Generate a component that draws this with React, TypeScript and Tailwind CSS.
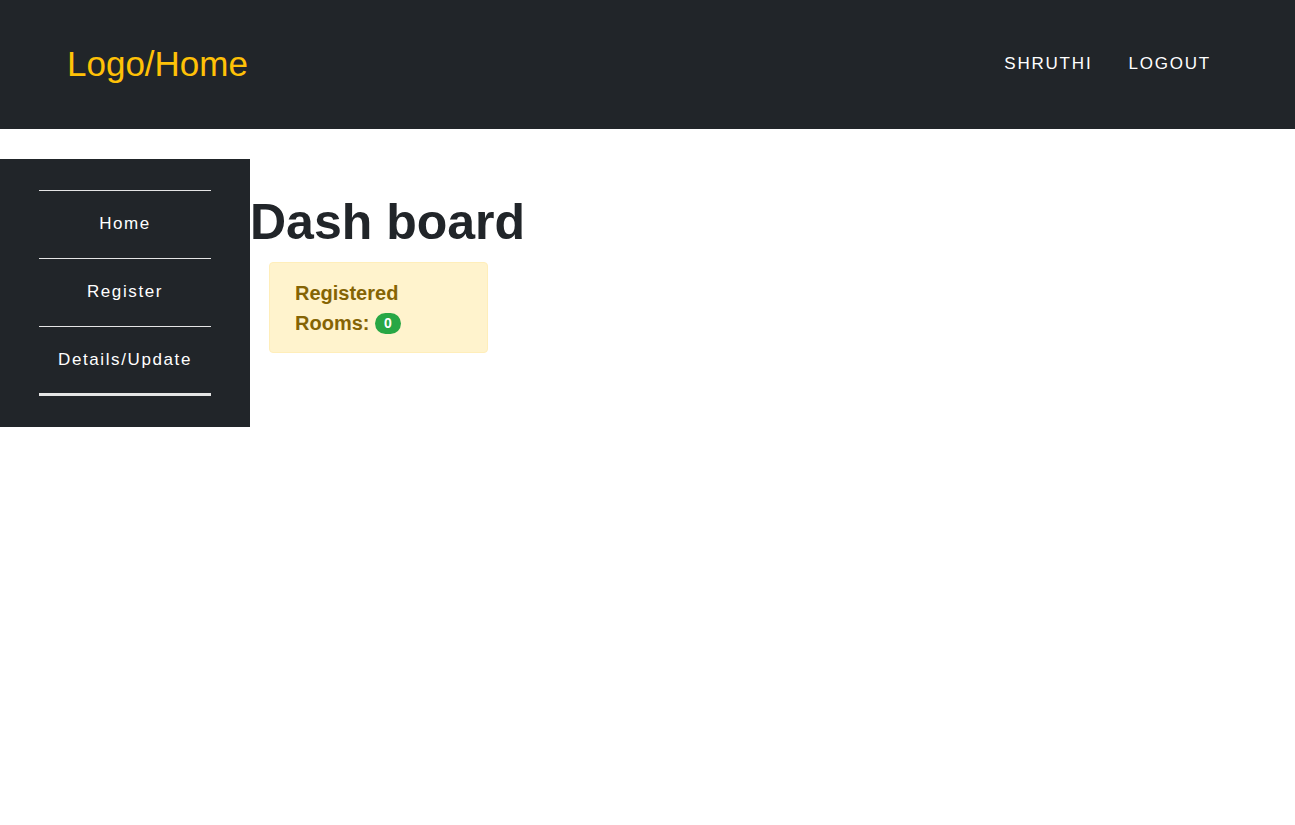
import React from 'react';

const navLinks = ['SHRUTHI', 'LOGOUT'];
const sideLinks = ['Home', 'Register', 'Details/Update'];

export default function App() {
    return (
        <div className="min-h-screen bg-white font-['Liberation_Sans',Arial,sans-serif]">

            {/* Top navbar */}
            <nav className="h-[129px] bg-[#212529] flex items-center justify-between pl-[67px] pr-[84px]">
                <a className="text-[35px] leading-none text-[#ffc107] -mt-[2px]">Logo/Home</a>
                <div className="flex items-center gap-[36px] -mt-[1px]">
                    {navLinks.map((link) => (
                        <a key={link} className="text-[17px] tracking-[1.8px] text-white">{link}</a>
                    ))}
                </div>
            </nav>

            <div className="flex items-start mt-[30px]">

                {/* Sidebar */}
                <aside className="w-[250px] bg-[#212529] px-[39px] pt-[31px] pb-[31px]">
                    <ul className="border-b-[3px] border-[#e5e5e5]">
                        {sideLinks.map((link, i) => (
                            <li
                                key={link}
                                className={`${i === sideLinks.length - 1 ? 'h-[67px]' : 'h-[68px]'} border-t border-[#e5e5e5] flex items-center justify-center pb-[1px] text-[17px] tracking-[1.6px] text-white`}
                            >
                                {link}
                            </li>
                        ))}
                    </ul>
                </aside>

                {/* Main */}
                <main className="pt-[33px]">
                    <h1 className="text-[50px] leading-[1.2] font-bold text-[#212529]">Dash board</h1>
                    <div className="mt-[10px] ml-[19px] w-[219px] bg-[#fff3cd] border border-[#ffeeba] rounded-[4px] pl-[25px] pr-[20px] pt-[15px] pb-[14px]">
                        <p className="text-[20px] leading-[30px] font-bold text-[#856404]">
                            Registered Rooms:{' '}
                            <span className="inline-flex items-center justify-center align-[2px] w-[26px] h-[21px] rounded-full bg-[#28a745] text-white text-[14px] leading-none">0</span>
                        </p>
                    </div>
                </main>
            </div>
        </div>
    );
}
